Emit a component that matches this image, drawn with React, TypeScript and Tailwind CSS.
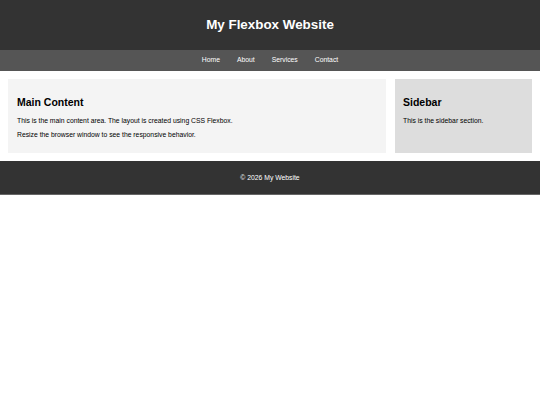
export default function App() {
  return (
    <div className="min-h-screen bg-white font-['Liberation_Sans',Arial,sans-serif] text-black">
      {/* header */}
      <header className="flex h-[50px] items-center justify-center bg-[#333333]">
        <h1 className="text-[13.4px] font-bold text-white">My Flexbox Website</h1>
      </header>

      {/* nav */}
      <nav className="flex h-[21px] items-center justify-center gap-[17px] bg-[#555555] text-[6.8px] text-white">
        <a>Home</a>
        <a>About</a>
        <a>Services</a>
        <a>Contact</a>
      </nav>

      {/* content */}
      <div className="flex gap-[9px] p-[8px]">
        <main className="flex-1 bg-[#f4f4f4] px-[9px] pt-[17px] pb-[14px]">
          <h2 className="text-[10.5px] leading-[12px] font-bold">Main Content</h2>
          <p className="mt-[9px] text-[6.8px] leading-[8px]">This is the main content area. The layout is created using CSS Flexbox.</p>
          <p className="mt-[6px] text-[6.8px] leading-[8px]">Resize the browser window to see the responsive behavior.</p>
        </main>
        <aside className="w-[137px] bg-[#dddddd] px-[8px] pt-[17px]">
          <h2 className="text-[10.5px] leading-[12px] font-bold">Sidebar</h2>
          <p className="mt-[9px] text-[6.8px] leading-[8px]">This is the sidebar section.</p>
        </aside>
      </div>

      {/* footer */}
      <footer className="flex h-[34px] items-center justify-center border-b border-[#666] bg-[#333333] pt-[2px] text-[6.8px] text-white">
        © 2026 My Website
      </footer>
    </div>
  )
}
